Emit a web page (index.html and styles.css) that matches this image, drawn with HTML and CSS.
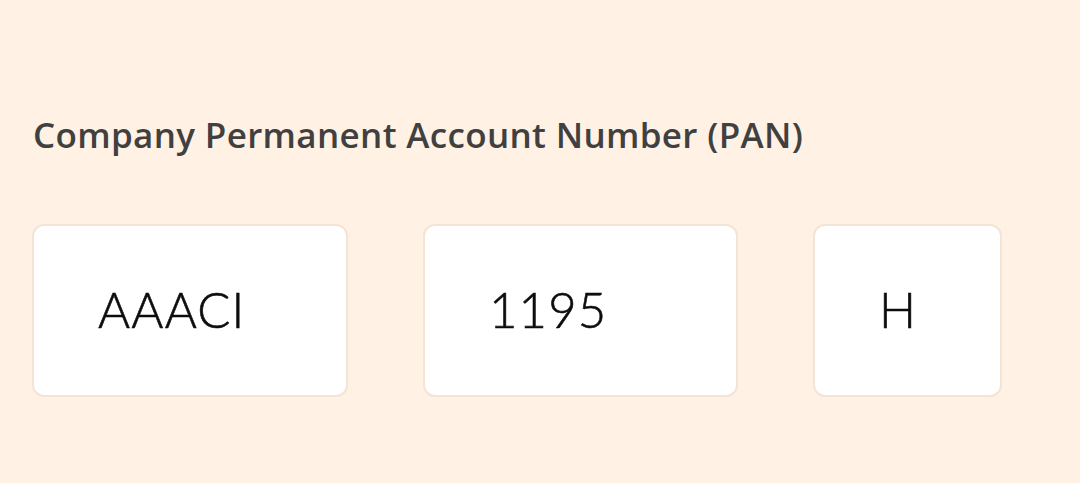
FILE: index.html
```html
<!DOCTYPE html>
<html lang="en">
<head>
<meta charset="utf-8">
<title>PAN</title>
<link rel="stylesheet" href="styles.css">
</head>
<body>
<main class="page">
  <h1 class="label">Company Permanent Account Number (PAN)</h1>
  <div class="fields">
    <div class="field field-wide">AAACI</div>
    <div class="field field-mid">1195</div>
    <div class="field field-narrow">H</div>
  </div>
</main>
</body>
</html>
```

FILE: styles.css
```css
html, body {
  margin: 0;
  padding: 0;
  background: #fff1e3;
}
body {
  font-family: Lato, "Open Sans", sans-serif;
}
.page {
  padding: 113px 0 0 32px;
}
.label {
  margin: 0 0 0 1px;
  font-family: "Open Sans", Lato, sans-serif;
  font-size: 35px;
  letter-spacing: 0.34px;
  line-height: 44px;
  font-weight: 600;
  color: #414040;
}
.fields {
  display: flex;
  gap: 75px;
  margin-top: 67px;
}
.field {
  box-sizing: border-box;
  height: 173px;
  background: #ffffff;
  border: 2px solid #f4e4d6;
  border-radius: 12px;
  display: flex;
  align-items: center;
  padding: 0 0 3px 64px;
  font-size: 49px;
  letter-spacing: 1.2px;
  font-weight: 300;
  -webkit-text-stroke: 0.6px #0d0d0d;
  color: #0d0d0d;
}
.field-wide {
  width: 316px;
}
.field-mid {
  width: 315px;
}
.field-narrow {
  width: 189px;
}
```
